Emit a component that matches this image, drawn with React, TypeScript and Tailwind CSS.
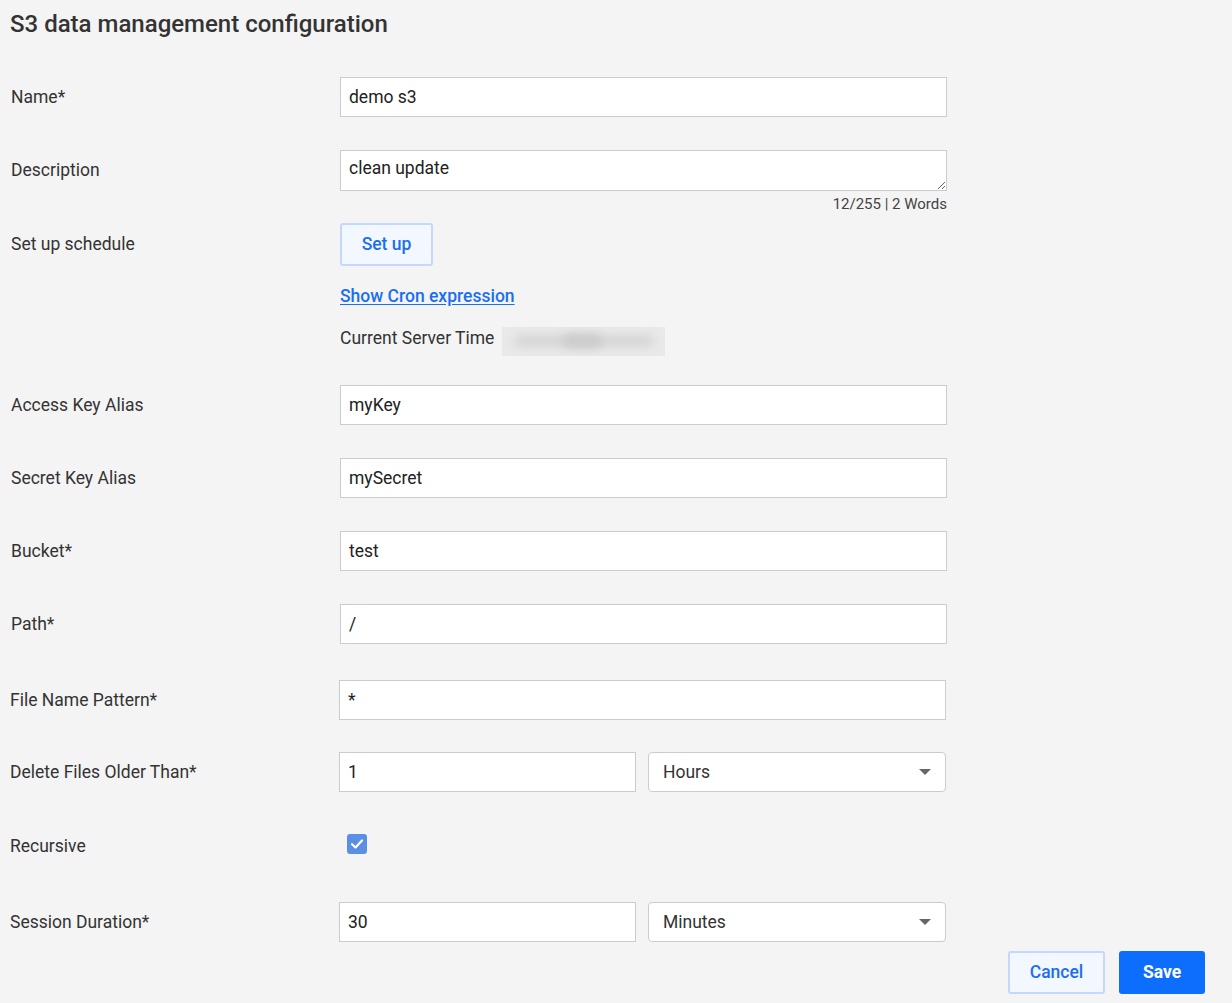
import React from "react";

const font = { fontFamily: "Roboto, 'Liberation Sans', sans-serif" };

function Label({ children, x = 10 }: { children: React.ReactNode; x?: number }) {
  return (
    <div className={`${x === 10 ? "pl-[10px] w-[339px]" : "pl-[11px] w-[340px]"} shrink-0 text-[17.5px] text-[#333]`}>
      {children}
    </div>
  );
}

function TextInput({ value, w = "w-[607px]" }: { value: string; w?: string }) {
  return (
    <div className={`${w} h-[40px] bg-white border border-[#cccccc] flex items-center px-[8px] text-[17.5px] text-[#222]`}>
      {value}
    </div>
  );
}

function SelectBox({ value }: { value: string }) {
  return (
    <div className="w-[298px] h-[40px] bg-white border border-[#cccccc] rounded-[4px] flex items-center justify-between pl-[14px] pr-[14px] text-[17.5px] text-[#333]">
      <span>{value}</span>
      <svg width="12" height="6" viewBox="0 0 12 6">
        <path d="M0 0 L12 0 L6 6 Z" fill="#666" />
      </svg>
    </div>
  );
}

export default function App() {
  return (
    <div className="min-h-[1003px] w-[1232px] bg-[#f4f4f4] overflow-hidden" style={font}>
      <div className="pt-[9px] pl-[10px] text-[24px] font-medium text-[#333] leading-[30px]">
        S3 data management configuration
      </div>

      {/* Name */}
      <div className="flex items-center mt-[38px]">
        <Label x={11}>Name*</Label>
        <TextInput value="demo s3" />
      </div>

      {/* Description */}
      <div className="flex items-center mt-[33px]">
        <Label x={11}>Description</Label>
        <textarea
          defaultValue="clean update"
          className="w-[607px] h-[41px] bg-white border border-[#cccccc] px-[8px] pt-[6px] text-[17.5px] text-[#222] leading-[22px] outline-none block"
          style={font}
        />
      </div>
      <div className="flex mt-[3px]">
        <div className="w-[340px] shrink-0" />
        <div className="w-[607px] text-right text-[15px] text-[#444] leading-[20px]">12/255 | 2 Words</div>
      </div>

      {/* Schedule */}
      <div className="flex items-center mt-[9px]">
        <Label x={11}>Set up schedule</Label>
        <button className="w-[93px] h-[43px] bg-[#f3f7ff] border-2 border-[#c3d8ff] rounded-[3px] text-[17.5px] font-medium text-[#1a6ff0]" style={font}>
          Set up
        </button>
      </div>
      <div className="flex mt-[19px]">
        <div className="w-[340px] shrink-0" />
        <a className="text-[17.5px] font-medium text-[#1a6ff0] underline underline-offset-2 leading-[22px]">Show Cron expression</a>
      </div>
      <div className="flex items-center mt-[14px]">
        <div className="w-[340px] shrink-0" />
        <span className="text-[17.5px] text-[#333]">Current Server Time</span>
        <div className="ml-[8px] mt-[6px] w-[163px] h-[29px] bg-[#e9e9e9] relative overflow-hidden">
          <div className="absolute left-[12px] top-[8px] w-[140px] h-[12px] bg-[#d6d6d6] blur-[4px] rounded-full" />
          <div className="absolute left-[60px] top-[7px] w-[40px] h-[14px] bg-[#cccccc] blur-[4px] rounded-full" />
        </div>
      </div>

      {/* Access Key */}
      <div className="flex items-center mt-[29px]">
        <Label x={11}>Access Key Alias</Label>
        <TextInput value="myKey" />
      </div>
      <div className="flex items-center mt-[33px]">
        <Label x={11}>Secret Key Alias</Label>
        <TextInput value="mySecret" />
      </div>
      <div className="flex items-center mt-[33px]">
        <Label x={11}>Bucket*</Label>
        <TextInput value="test" />
      </div>
      <div className="flex items-center mt-[33px]">
        <Label x={11}>Path*</Label>
        <TextInput value="/" />
      </div>
      <div className="flex items-center mt-[36px]">
        <Label>File Name Pattern*</Label>
        <TextInput value="*" />
      </div>
      <div className="flex items-center mt-[32px]">
        <Label>Delete Files Older Than*</Label>
        <TextInput value="1" w="w-[297px]" />
        <div className="ml-[12px]">
          <SelectBox value="Hours" />
        </div>
      </div>
      <div className="flex items-center mt-[34px] h-[40px]">
        <Label>Recursive</Label>
        <div className="ml-[8px] -mt-[4px] w-[20px] h-[20px] rounded-[3px] bg-[#5b8fe3] flex items-center justify-center">
          <svg width="16" height="16" viewBox="0 0 16 16">
            <path d="M3 8.2 L6.5 11.5 L13 4.5" fill="none" stroke="white" strokeWidth="2.2" strokeLinecap="round" strokeLinejoin="round" />
          </svg>
        </div>
      </div>
      <div className="flex items-center mt-[36px]">
        <Label>Session Duration*</Label>
        <TextInput value="30" w="w-[297px]" />
        <div className="ml-[12px]">
          <SelectBox value="Minutes" />
        </div>
      </div>

      <div className="flex justify-end gap-[14px] mt-[9px] pr-[27px]">
        <button className="w-[97px] h-[43px] bg-[#f3f7ff] border-2 border-[#c3d8ff] rounded-[3px] text-[17.5px] font-medium text-[#1a6ff0]" style={font}>
          Cancel
        </button>
        <button className="w-[86px] h-[43px] bg-[#0d6efd] rounded-[3px] text-[17.5px] font-bold text-white" style={font}>
          Save
        </button>
      </div>
    </div>
  );
}
